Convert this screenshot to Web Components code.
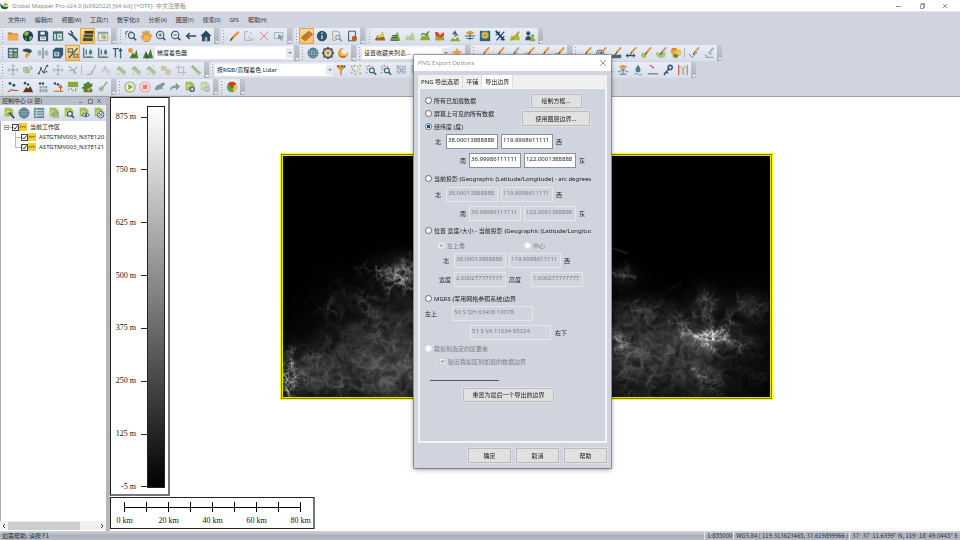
<!DOCTYPE html>
<html lang="zh-CN">
<head>
<meta charset="utf-8">
<title>Global Mapper Pro</title>
<style>
html, body { margin: 0; height: 100%; }
body { font: 6px/8px "Noto Sans", "Noto Sans CJK SC", sans-serif; color: #1b1b1b; background: #cfd4de; overflow: hidden; }
</style>
</head>
<body>
<gm-app></gm-app>
<script>
const base = '*{box-sizing:border-box}button,input,select{font:inherit;color:inherit;margin:0}';
function define(name, css, html, setup) {
  customElements.define(name, class extends HTMLElement {
    constructor() { super(); this.attachShadow({ mode: 'open' }); }
    connectedCallback() {
      if (this.shadowRoot.childNodes.length) return;
      this.shadowRoot.innerHTML = '<style>' + base + css + '</style>' + (typeof html === 'function' ? html(this) : html);
      if (setup) setup(this);
    }
  });
}

/* ---------- icons, drawn on a 14 unit grid ---------- */
const N = '#315269', G = '#86ad36', D = '#4c7a2b', O = '#ee9426', Y = '#f3c64a', L = '#9aa8b4', R = '#d9382b';
const p = (d, f, e = '') => `<path d="${d}" fill="${f}" ${e}/>`;
const s = (d, c = N, w = 1.2) => `<path d="${d}" fill="none" stroke="${c}" stroke-width="${w}"/>`;
const c = (x, y, r, f, st = 'none', w = 1) => `<circle cx="${x}" cy="${y}" r="${r}" fill="${f}" stroke="${st}" stroke-width="${w}"/>`;
const pen = (col = O) => s('M13 .5 8 6', col, 2.2) + s('M8.300 5.700 6 9', '#5d4030', 1.3);
const hill = p('M1 12 4 6l2 2 4-6 3 10z', G);
const layer = p('M2 1h7l3 3v7H2z', '#a3c04f') + s('M3.500 8 5.500 4l2 3 2-2', '#e9f2c4', 1);
const mag = (x, y, r, col = N) => c(x, y, r, '#dce8ee', col, 1.2) + s(`M${x+r*.7} ${y+r*.7}l3 3`, col, 1.7);
const pt = (x, y) => c(x, y, 1.5, N);
const I = {
  folder: p('M1 2.500h4l1.300 1.500H13V12H1z', '#d08a35') + p('M1 5.500h12v6.500H1z', '#f0ac50'),
  globe: c(7, 7, 6, '#173f5b') + p('M2.500 3l4-1.500 2 2-2 3-3 1zM8 8l3-1 1 2-3 3.500zM3 10l2-1 1 3z', '#8db743'),
  save: p('M1 1h10.500l1.500 2v10H1z', N) + p('M4 2h5v3.500H4zM3.500 7.500h7v4.500h-7z', '#e9eef4') + s('M4.500 9.500h5', N, .8),
  window: p('M1 1.500h12v11H1z', '#3f6a7c') + p('M2.500 4.500h2v6.500h-2zM6 4.500h5.500V11H6z', '#e4ecd8') + p('M7.500 6h2.500v3H7.500z', G),
  wrench: s('M5 5l7 7.500', N, 2.300) + s('M1.500 3.500 4.500 6 6.500 3.500 4 1', N, 1.700),
  layers: p('M3 1h10.500v3.300H3z', '#4a3420') + p('M2 5h11v3.300H2z', '#6a4621') + p('M1 9h11.500v4H1z', '#3f5040') + s('M1 9h11.500M2 5h11', G, .8),
  overlay: p('M1 2h12v10.500H1z', '#8fa0ac') + p('M2 4.500h10v7H2z', '#e6ede0') + p('M5 5h5v5H5z', '#a9c387') + p('M7.500 7.500h3v3h-3z', O),
  zoomrect: s('M1 2h3M1 2v4M6 2h2M1 8v1', N, 1) + mag(7.5, 6.500, 3.500),
  hand: p('M1 7.500l1.300-1.200L4.300 8 3 2.500 4.500 2 6.300 6 6 1h1.500l1 5L9.300 1.500h1.400v5.500L12.500 5l1 .7-1.800 6L9.500 13.500H5z', '#f2b64f', 'stroke="#a3732a" stroke-width=".6"'),
  zoomin: mag(6, 5.800, 4.300) + s('M3.800 5.800h4.400M6 3.600V8', D, 1.100),
  zoomout: mag(6, 5.800, 4.300) + s('M3.800 5.800h4.400', D, 1.100),
  back: s('M1.500 7H13M5.500 3.500 2 7l3.500 3.500', '#28495f', 1.700),
  home: p('M7 .5 .5 7h1.800v6h9.400V7h1.800z', '#28495f') + p('M5.500 8.500h3V13h-3z', '#9db7c6'),
  pencil: s('M12.500 2 5 9.500', O, 2.700) + s('M5.500 9 2.500 12.500', '#6b4a2c', 1.600),
  select: s('M2 2v10h9L6 7M2 2h4', L, 1) + s('M9 2v3M12 9v2', L, .8),
  cross: s('M2 2l10 10M12 2 2 12', '#dd9aa5', 1.200),
  pointer: s('M1.500 3h10v7h-10z', L, 1) + p('M6 5l6 3-2.500.8L11 12l-1.500.5L8 9.500 6 11z', '#8295a3'),
  measure: p('M.5 9 9 1.500 13.500 5 5 12.500z', '#d7822a', 'stroke="#7a4c1e" stroke-width=".8"') + s('M5 6l1.500 1.500M7 4.500 8.300 6M3.500 8l1.200 1.200', '#5d3b17', .8),
  info: c(7, 7, 6, N) + s('M7 6v4.500M7 3v1.700', '#dfe9ee', 1.600),
  pagefind: s('M2 1.500h6l2 2V7M2 1.500v10.500h4', '#b6ae86', 1.200) + mag(8, 8.500, 2.500, '#8496a3'),
  pagedot: s('M3 1.500h8v11H3z', '#4d6473', 1.300) + c(9.800, 9.800, 3, '#b5611d'),
  mtn1: p('M1 12 4 6l2 2 4-6 3 10z', D) + p('M3 9.500 6 6l4-3 2 5z', Y) + p('M2 12l3-2 4 1 3-2 1 3z', '#d2502d'),
  mtn2: hill + s('M3 9h7M4 6.500h5M2 12h10', '#25515d', 1.100),
  mtn3: `<g opacity=".45">${hill}</g>`,
  mtn4: hill + s('M2 6l3-2 3 1.500 4-4', D, 1.200),
  mtn5: p('M1 2l5 4 6-4-1 10H2z', O) + p('M1 2l4 1 2 4 4-4 1 3-4 3-5-2z', R) + p('M1 12l4-4 3 2 4-1v3z', G),
  mtn6: p('M1 13l3-4 3 2 3-3 3 5z', G) + s('M7 1v7M4 5l3-3 3 5', N, 1.300),
  mtn7: p('M2 3l5-2 5 2-2 2H4z', O) + s('M1 7h12M3 10h8M7 4v8', '#3d6577', 1.200),
  heat: p('M1 1h12v12H1z', '#315d8c') + c(7, 6, 4.500, G) + c(7, 6, 3, Y) + c(7, 6, 1.500, '#ef6538'),
  fly: s('M2 1l10 11', '#163f5b', 2.200) + s('M12 2 3 12M2 6l5-4M8 12l4-5', '#163f5b', 1.300),
  zig: p('M1 12l2-6 3 2 4-6 3 10z', '#a5bf36') + s('M2 12.500 12.500 2', '#cd8e25', 1.300),
  people: c(5, 4, 2.400, N) + p('M1.500 12q0-5 3.500-5t3.500 5z', N) + c(10, 7, 2, G) + p('M7 13q0-4 3-4t3 4z', G),
  grid: p('M1 1h12v12H1z', '#466b7c') + p('M2.500 3h4v2h-4zM8 3h3.500v2H8zM2.500 6.500h4v2h-4zM2.500 10h4v1.500h-4z', '#dce9e4') + p('M8 7h4v5H8z', G),
  curve: p('M1 3q8-3 11 2l-3 2.500-3-1.500-5-1z', N) + p('M5.500 6.500l4 2-5 5-.5-4z', O),
  mirror: s('M7 1v12', '#4f7589', 1.300) + p('M1 4h4v6H1zM9 4h4v6H9z', '#9fb3c0'),
  cube: p('M1 4l3-3h9v8l-3 4H1z', '#315a70') + p('M2.500 5.500h6V11h-6z', '#c7d6dc') + s('M4 7h3M4 9h3', N, 1),
  slash: s('M1.500 2h5v4h-5zM8 8.500h4.500v3.500H8z', '#6a6a58', 1.300) + s('M12.500 1 2 13', N, 1.500),
  well: s('M2 1v11h11M5 3v6', '#386579', 1.300) + p('M10 2q4 6 0 7-4-1 0-7', '#3f819c') + s('M5 11h6', G, 1.200),
  well2: s('M1 2h7M4 2v10M10 5v8', '#386579', 1.500) + p('M10 1l2.500 4h-5z', N),
  sunmt: c(4, 4, 2.700, O) + p('M3 13l4-7 2 3 2-6 2 10z', D),
  twomt: p('M1 13l3.500-8L8 13zM6 13l4-11 3 11z', D) + p('M4.500 5 8 13H5z', '#244d5e'),
  wire: c(7, 7, 5.800, '#9bb8c4', '#3c6478', 1) + s('M1.500 7h11M7 1.500v11M2.700 4h8.600M2.700 10h8.600M6.500 1.500q-6 5.500 0 11M7.500 1.500q6 5.500 0 11', '#3c6478', .7),
  gear: c(7, 7, 5.300, 'none', N, 2) + s('M7 0v2M7 12v2M0 7h2M12 7h2M2 2l1.500 1.500M12 2l-1.500 1.500M2 12l1.500-1.500M12 12l-1.500-1.500', N, 2) + c(7, 7, 4, '#f3d9a8', O, 1.200) + c(7, 7, 1.500, '#4f87a0'),
  swirl: c(7, 7, 4.800, '#f2b64f', O, 2) + c(9, 5, 3.600, '#e9edf5') + s('M3 10q3 3 7 1', '#b4521c', 1.200),
  star: p('M7 .7l1.900 4 4.400.500-3.300 3 .9 4.400L7 10.400 3.100 12.600 4 8.200.7 5.200l4.400-.5z', '#f3a545'),
  pen1: s('M1 12q4-5 6-3t5-1', '#5b7788', 1) + pen(),
  pen2: c(6, 8, 4.500, 'none', '#38576b', 1) + c(6, 8, 2, 'none', '#38576b', 1) + pen(),
  pen3: p('M1 9h12v4H1z', '#4a6374') + pen(),
  pen4: s('M1 10h11M3 8v4M10 8v4', '#294f67', 1.300) + pen(),
  pen5: c(4.500, 9.500, 3.200, '#a6c957') + pen(),
  pen6: `<g opacity=".6">${p('M1 6l5 1 6-2v6l-5 2-5-2z', G)}</g>` + pen('#bb9b74'),
  pen7: s('M1 8l4 4 6-6', '#5b7788', 1) + pen('#c7a174'),
  pen8: s('M2 9l4 3h5M3 12h9', '#9cabb5', 1.500) + s('M12 1 7 7l3 1', '#9cabb5', 2),
  blobs: c(5, 5, 4, '#ef9f2c') + c(9.500, 6.500, 4, Y) + p('M3 9l4-1 3 2-2 3-4-1z', '#58944a') + s('M2 3q3-3 6 1', '#c9642a', 1),
  move: s('M7 1v12M1 7h12M5 3l2-2 2 2M5 11l2 2 2-2M3 5 1 7l2 2M11 5l2 2-2 2', '#9baab6', 1) + c(7, 7, 1.300, '#8fac65'),
  rotate: p('M3 5h6v6H3z', '#a9c387') + s('M2 9V4h6M9 2l3 3-3 2', L, 1.200),
  nodes: s('M2 11 4.500 6l3 4 4-8', '#2b4b60', 1.100) + c(2, 11, 1.200, N) + c(4.500, 5, 1.200, N) + c(8, 10, 1.200, N) + c(12, 2, 1.200, N) + c(11, 9, 1, N),
  cutx: s('M2 2l9 9M12 3 8 7 2 8M8 7v5', '#9baab6', 1.200),
  node: s('M2 12h5l5-9', '#9baab6', 1.200) + c(8, 10, 1.300, '#d4aa86') + c(12, 2, 1, '#d4aa86'),
  link: s('M1 10l5-5 6 5M6 2v3', '#9baab6', 1.100) + s('M3 5l8 8', '#b3bec7', 1),
  tag: p('M2 5l3-2 7 6-3 3z', '#b0c984') + s('M2 7l3-4 7 6-2 4M3 11l2 1M9 2l1 1', '#8fa3aa', 1),
  boxes: s('M2 3h5v4H2zM7 7h5v5H7z', '#c5a897', 1) + c(4, 5, 1.500, '#b0c984') + c(9.500, 9.500, 1.500, '#b0c984'),
  crop: s('M4 1v9h9M1 4h9v9', '#b9c1ca', 1.300),
  ruler: s('M2 2l10 10', '#a9c387', 3.500) + s('M2 4l2-2M5 7l2-2M8 10l2-2', '#7e9c77', .7),
  funnel: p('M1 2h12L8 8v5H6V8z', '#da9831') + c(4, 2.500, 1.300, R) + c(8, 2.500, 1.300, D) + c(11, 3, 1.200, N),
  dots: ['2,3','5,2','9,3','12,2','3,6','11,6','2,10','5,8','8,9','6,12','12,11'].map((v, i) => c(...v.split(','), 1.100, ['#d99b50', '#92a9b4', '#b7c56f'][i % 3])).join(''),
  dotfind: ['2,3','5,2','9,3','3,6','2,10'].map((v, i) => c(...v.split(','), 1.100, i % 2 ? '#d98078' : '#8fa6b4')).join('') + mag(8, 7.500, 2.800),
  mesh: s('M1 3h12M1 6h12M1 9h12M3 1v11M6 1v11M9 1v11M12 1v11', '#9fb2bf', .8) + s('M2 2l9 9M12 3l-8 8', '#7b95a4', 1),
  tower: p('M2 3l5-2 5 2-2 2H4z', '#dc9c4b') + s('M7 5v6M4 7h6M3 12h8M1 9h3M10 9h3', '#54798e', 1.300),
  drop: p('M7 1q6 8 0 9-6-1 0-9', '#42828d') + s('M2 12q3-2 5 0t5 0', '#6e9ea8', 1),
  trend: s('M3 2h2l3 3', R, 1.300) + s('M1 11.500h12', '#4f6674', 1.200),
  key: s('M9 5 3 11v2M5 9l2 2', N, 1.700) + c(9.500, 4, 2.500, '#b8cbd5', N, 1.600),
  barcode: s('M2 1v12', R, 1.200) + s('M5 2l3 10M9 2 6 12', '#9aac9c', 1.100) + s('M12 1v12', G, 1.300) + s('M2 4h2M10 4h3M2 8h2M10 8h3', '#b9a24e', 1),
  pts: c(3.500, 3, 1.700, N) + c(8, 5, 1.700, N) + s('M1 12h2l2-2 3 1h5', '#b24a30', 1.200),
  ptmt: c(3.500, 2.500, 1.500, N) + c(7, 4, 1.500, N) + p('M1 13l4-6 2 2 3-3 3 7z', '#5b3822'),
  ptgrid: c(3.500, 3, 1.500, N) + c(7, 3, 1.500, N) + p('M3 6h9v7H3z', '#86a0ae') + s('M3 9h9M6 6v7M9 6v7', '#eef3f5', .8),
  pttree: c(3.500, 3, 1.500, N) + c(7, 4, 1.500, N) + s('M10 6v6M8 8l2-3 2 3M2 12h11', '#bf6b2d', 1.300),
  canopy: p('M1 1h12v6H1z', '#86ad36') + s('M2 9v2M5 8v2M10 9v3M7 10v2M12 8v1', '#59813a', 1),
  plugin: p('M2 3h3q0-2 2-2t2 2h3v4h-2v2h2v4H2V9H0V7h2z', '#4f8437') + c(8, 10, 2, O),
  brush: s('M12 1 7 7', '#8699a5', 1.500) + c(5, 9, 3, '#b0c5a1') + s('M3 11l4-4', '#778e80', 1),
  play: c(7, 7, 5.900, '#e8f1d7', '#8fa67b', 1.200) + p('M5 3.500 10.500 7 5 10.500z', '#80ae35'),
  stop: c(7, 7, 5.900, '#f4dddc', '#dea6a3', 1.200) + p('M4.500 4.500h5v5h-5z', '#df7f72'),
  turtle: p('M1 10q1-6 6-6 2-3 5-2l1 2-3 2v4l-2-1-5 2z', '#7e98a9'),
  jump: p('M1 12q0-7 7-7V2l5 4.500L8 11V8Q3 8 1 12z', '#7e98a9'),
  layplus: layer + c(9.500, 9.500, 3.300, '#466d79') + s('M7.500 9.500h4M9.500 7.500v4', '#fff', 1),
  layminus: `<g opacity=".5">${layer + c(9.500, 9.500, 3.300, '#71919b') + s('M7.500 9.500h4', '#fff', 1)}</g>`,
  ball: c(7, 7, 6, '#58a845') + p('M7 7 2 3.500A6 6 0 0 1 12 3.500z', R) + p('M7 7l5-3.500a6 6 0 0 1-3 9.200z', Y) + c(7, 7, 2, '#54812e'),
  laywrench: layer + s('M8 7l5 6', N, 2) + s('M6 7l2 1 1-2', N, 1.300),
  list: p('M1 1h12v12H1z', '#6f8f9f') + s('M2 4h10M2 7h10M2 10h10', '#dfe9ee', 1) + s('M4.500 2v10', '#dfe9ee', .7),
  layrect: layer + s('M6 6h6v6H6z', '#7f98a7', 1),
  layfind: layer + mag(8, 8, 2.800),
  layeye: layer + p('M5 9.500q4-5 8.500 0-4.500 4-8.500 0z', '#e5edf0', 'stroke="#315269"') + c(9.300, 9.500, 1.300, N),
  layx: layer + c(9, 9, 3.700, '#e5edf0', N) + s('M7 7l4 4M11 7l-4 4', N, 1),
  logo: p('M1 3q-2 10 7 10 5-1 5-5-5 3-7 0Q3 9 1 3z', '#1f5a4c') + p('M5 5l4-3 4 4-4 3-3-1z', '#a9c23b'),
  terrain: p('M0 0h14v14H0z', '#ead72e') + s('M1 9l3-4 2 3 2-3 2 3 3-3', '#b84a20', 1.500)
};
define('gm-icon', ':host{display:block;width:12px;height:12px}svg{display:block;width:100%;height:100%}',
  el => `<svg viewBox="0 0 14 14" aria-hidden="true">${I[el.getAttribute('name')] || ''}</svg>`);

/* ---------- toolbars ---------- */
define('gm-toolbar', `
:host{display:flex;height:16px;flex:none;background:linear-gradient(#e9edf6,#d9deea);border-radius:2px}
.grip{width:5px;flex:none;background:radial-gradient(circle,#98a0ac 0 .5px,transparent 1px) 0 1px/5px 3px}
button{width:15px;height:16px;padding:0;border:0;background:none;display:grid;place-items:center;flex:none}
button.on{background:linear-gradient(#fbdc9c,#f8c063);outline:1px solid #e2a64b;outline-offset:-1px}
i{width:1px;margin:3px 1px;background:#b0b7c2}
.end{width:5px;margin-left:1px;background:linear-gradient(#c3c8d1,#aab0ba);display:flex;flex-direction:column;justify-content:flex-end;align-items:center;border-radius:0 2px 2px 0;padding-bottom:1px}
.end:after{content:"";border:solid transparent;border-width:2px 2px 0;border-top-color:#fff}`,
  el => '<div class="grip"></div><slot name="before"></slot>' +
    (el.getAttribute('tools') || '').split(' ').filter(Boolean).map(t => {
      if (t === '|') return '<i></i>';
      const n = t.replace('*', '');
      return `<button class="${n !== t ? 'on' : ''}" title="${n}" aria-label="${n}"><gm-icon name="${n}"></gm-icon></button>`;
    }).join('') + '<slot></slot><div class="end"></div>');
define('gm-select', `
:host{display:flex;width:var(--w);height:12px;margin:2px 0;background:#fff;align-items:center}
label{flex:1;display:block;min-width:0}
select{appearance:none;border:0;background:#fff;width:100%;height:12px;padding:0 2px;outline:0;display:block}
span{width:7px;height:10px;background:#e5e8ef;display:grid;place-items:center}
span:after{content:"";border:solid transparent;border-width:2px 2px 0;border-top-color:#888}`,
  el => `<label><select aria-label="${el.getAttribute('label')}"><option>${el.getAttribute('value')}</option></select></label><span></span>`);
define('gm-toolrow', ':host{display:flex;gap:var(--gap,1px);height:17px}', '<slot></slot>');

/* ---------- frame ---------- */
define('gm-titlebar', `
:host{display:flex;height:12px;align-items:center;background:#fff;color:#8b8b8b;padding:0 4px 0 0;border-bottom:1px solid #e4e6ec}
gm-icon{width:9px;height:9px}
h1{font:inherit;margin:0 0 0 3px;flex:1;white-space:nowrap}
button{border:0;background:none;padding:0;width:23px;height:10px;display:grid;place-items:center}
svg{width:8px;height:8px;fill:none;stroke:#999}`,
  `<gm-icon name="logo"></gm-icon><h1>Global Mapper Pro v24.0 (b092022) [64-bit] (+OTF]- 中文注册板</h1>
  <button aria-label="最小化"><svg viewBox="0 0 8 8"><path d="M1 4.500h5"/></svg></button>
  <button aria-label="还原"><svg viewBox="0 0 8 8"><path d="M2.500 2.500h3v4h-3zM3.500 2V1.500h3v4H6"/></svg></button>
  <button aria-label="关闭"><svg viewBox="0 0 8 8"><path d="M2 2l4 4M6 2 2 6"/></svg></button>`);
define('gm-menubar', `
:host{display:block;height:16px}
nav{display:flex;height:15px;align-items:center;padding-left:8px;gap:9px}
button{border:0;background:none;padding:0;white-space:nowrap;color:#333}
small{font-size:5px}`,
  '<nav>' + [['文件', 'F'], ['编辑', 'E'], ['视图', 'W'], ['工具', 'T'], ['数字化', 'I'], ['分析', 'A'], ['图层', 'Y'], ['搜索', 'S'], ['', 'GPS'], ['帮助', 'H']]
    .map(([a, b]) => `<button>${a}<small>${a ? '(' + b + ')' : b}</small></button>`).join('') + '</nav>');
define('gm-statusbar', `
:host{display:flex;height:9px;line-height:9px;background:linear-gradient(#d3d7dd,#a8b0bc 50%,#b6bcc6);color:#333;padding:0 1px 0 2px;white-space:nowrap;font-family:"Noto Sans CJK SC",sans-serif}
p{margin:0;flex:1}
span{border-left:1px solid #e3e6ea;padding:0 1px 0 2px}`,
  `<p>如需帮助, 请按 F1</p><span>1:855000</span><span>WGS 84 ( 119.313623465, 37.619899966 )</span><span>37° 37' 11.6399" N, 119° 18' 49.0445" E</span>`);

/* ---------- layer panel ---------- */
define('gm-layer', `
:host{display:flex;height:10px;align-items:center;padding-left:var(--in,3px);white-space:nowrap}
b{width:5px;height:5px;border:1px solid #a5a5a5;display:grid;place-items:center;flex:none}
b:after{content:"";width:3px;height:1px;background:#777}
u{width:3px;height:1px;background:#bbb;flex:none}
:host([leaf]) u{width:5px}
label{display:flex;align-items:center}
input{appearance:none;width:7px;height:7px;border:1px solid #444;background:#fff;margin:0}
.box{display:grid}
.box>*{grid-area:1/1}
svg{width:7px;height:7px;fill:none;stroke:#333;pointer-events:none}
gm-icon{width:8px;height:8px}
span.t{margin-left:3px}`,
  el => (el.hasAttribute('leaf') ? '' : '<b></b>') + `<u></u><label><span class="box"><input type="checkbox" checked><svg viewBox="0 0 7 7"><path d="M1.500 3.500 3 5l2.500-3.500"/></svg></span><gm-icon name="terrain"></gm-icon><span class="t"><slot></slot></span></label>`);
define('gm-panel', `
:host{display:flex;flex-direction:column;width:110px;border-right:4px solid #b3b6bc;background:#fff;flex:none;min-height:0}
header{display:flex;height:8px;background:#b7bfca;align-items:center;padding:0 2px;color:#333}
h2{font:inherit;margin:0;flex:1}
header button{border:0;background:none;padding:0;width:9px;height:8px}
header svg{display:block;width:8px;height:8px;fill:none;stroke:#777}
.tools{display:flex;height:16px;background:linear-gradient(#f0f3fa,#d3d9e6);align-items:center;padding-left:1px}
.tools button{border:0;background:none;width:15px;height:16px;padding:0;display:grid;place-items:center}
.tree{flex:1;overflow:hidden;padding-top:1px;border-left:1px solid #aab;min-height:0}
.kids{margin-left:14px;border-left:1px solid #bbb;height:16px}
.kids gm-layer{--in:0px}
.scroll{display:flex;height:9px;background:#f0f0f0;align-items:center;justify-content:space-between;margin-bottom:1px}
.scroll svg{width:8px;height:8px;fill:none;stroke:#444}
.scroll div{flex:1;padding-right:18px}.scroll div:before{content:"";display:block;height:8px;background:#cdcdcd}`,
  `<header><h2>控制中心 (2 层)</h2>
  <button aria-label="折叠"><svg viewBox="0 0 8 8"><path d="M2 5.500h3"/></svg></button><button aria-label="最大化"><svg viewBox="0 0 8 8"><path d="M2.500 2.500h4v4h-4z"/></svg></button><button aria-label="关闭"><svg viewBox="0 0 8 8"><path d="M2 2l4 4M6 2 2 6"/></svg></button></header>
  <div class="tools">${['laywrench', 'wire', 'list', 'layrect', 'layfind', 'layeye', 'layx'].map(n => `<button aria-label="${n}"><gm-icon name="${n}"></gm-icon></button>`).join('')}</div>
  <div class="tree"><gm-layer>当前工作区</gm-layer><div class="kids"><gm-layer leaf>ASTGTMV003_N37E120</gm-layer><gm-layer leaf>ASTGTMV003_N37E121</gm-layer></div></div>
  <div class="scroll"><svg viewBox="0 0 8 8"><path d="M5 2 3 4l2 2"/></svg><div></div><svg viewBox="0 0 8 8"><path d="M3 2l2 2-2 2"/></svg></div>`);

/* ---------- map ---------- */
define('gm-terrain', ':host{display:block;border:1px solid #ff0;background:#808000;padding:1px;box-sizing:border-box}canvas{display:block;width:100%;height:100%;border:1px solid #e4e400}',
  '<canvas width="488" height="242"></canvas>', el => {
  const cv = el.shadowRoot.querySelector('canvas'), g = cv.getContext('2d'), W = 488, H = 242;
  let seed = 7; const rnd = () => (seed = (seed * 1664525 + 1013904223) >>> 0) / 4294967296;
  const T = Array.from({ length: 65536 }, rnd);
  const at = (x, y) => T[((y & 255) << 8) | (x & 255)];
  const noise = (x, y) => {
    const i = Math.floor(x), j = Math.floor(y); let u = x - i, v = y - j; u = u * u * (3 - 2 * u); v = v * v * (3 - 2 * v);
    return (at(i, j) * (1 - u) + at(i + 1, j) * u) * (1 - v) + (at(i, j + 1) * (1 - u) + at(i + 1, j + 1) * u) * v;
  };
  /* broad elevation: x, y, radius x, radius y, strength */
  const B = [[120, 115, 24, 16, 50], [85, 165, 50, 38, 26], [125, 195, 60, 50, 44], [10, 218, 30, 22, 55], [60, 215, 70, 30, 44],
    [180, 190, 60, 50, 46], [340, 120, 16, 12, 34], [345, 200, 34, 42, 60], [385, 205, 50, 40, 46], [430, 185, 30, 13, 80], [423, 150, 15, 20, 40],
    [397, 172, 16, 22, 36], [465, 156, 26, 22, 32], [420, 222, 26, 24, 46], [470, 205, 36, 40, 16], [362, 160, 30, 18, 26], [110, 225, 60, 22, 34]];
  const img = g.createImageData(W, H);
  for (let y = 0; y < H; y++) for (let x = 0; x < W; x++) {
    let e = 0;
    for (const b of B) { const q = ((x - b[0]) / b[2]) ** 2 + ((y - b[1]) / b[3]) ** 2; if (q < 5) e += b[4] * Math.exp(-q); }
    let v = 0;
    if (e > 1) {
      const wx = x + noise(x / 7, y / 7) * 9, wy = y + noise(x / 7 + 50, y / 7 + 50) * 9; let a = .42, f = .09;
      for (let o = 0; o < 4; o++) { v += a * (1 - Math.abs(2 * noise(wx * f + o * 31, wy * f + o * 17) - 1)); a *= .7; f *= 2; }
      v = Math.min(150, e * (.3 + v * v * .75));
    }
    const k = (y * W + x) * 4; img.data[k] = img.data[k + 1] = img.data[k + 2] = v; img.data[k + 3] = 255;
  }
  g.putImageData(img, 0, 0);
  g.globalCompositeOperation = 'lighter';
  const walk = (x, y, a, len, al, depth) => {
    for (let i = 0; i < len; i++) {
      const nx = x + Math.cos(a) * 1.500, ny = y + Math.sin(a) * 1.300;
      g.strokeStyle = `rgba(255,255,255,${al * (1 - i / len * .75)})`; g.lineWidth = .9;
      g.beginPath(); g.moveTo(x, y); g.lineTo(nx, ny); g.stroke();
      x = nx; y = ny; a += (rnd() - .5) * 1.100;
      if (depth && rnd() < .45) walk(x, y, a + (rnd() < .5 ? -1 : 1) * (.6 + rnd() * .6), len * .5, al * .75, depth - 1);
    }
  };
  /* ridge systems: x, y, reach, alpha, arms */
  [[118, 122, 10, .4, 6], [112, 128, 8, .26, 5], [126, 114, 8, .3, 5], [124, 106, 6, .2, 4], [95, 115, 7, .3, 5], [78, 112, 6, .14, 4], [82, 145, 8, .15, 5], [86, 160, 8, .15, 5], [45, 154, 8, .14, 5],
    [8, 204, 8, .26, 5], [4, 224, 8, .4, 6], [12, 222, 7, .3, 5], [5, 236, 7, .35, 5], [30, 202, 6, .14, 4], [55, 232, 7, .16, 5], [100, 175, 14, .05, 6], [60, 190, 16, .05, 6],
    [90, 220, 16, .05, 6], [62, 140, 12, .06, 5], [118, 200, 16, .05, 6], [30, 225, 16, .06, 6],
    [431, 184, 10, .5, 8], [420, 180, 8, .28, 6], [408, 178, 7, .26, 5], [442, 182, 8, .25, 5], [460, 190, 7, .18, 5], [424, 144, 8, .2, 6], [422, 160, 8, .2, 5],
    [448, 166, 7, .24, 5], [462, 150, 10, .12, 6], [342, 120, 7, .26, 6], [338, 186, 8, .34, 6], [345, 200, 12, .14, 6], [396, 168, 8, .2, 5], [350, 155, 11, .1, 6], [368, 155, 11, .1, 6],
    [424, 222, 10, .18, 5], [430, 234, 8, .14, 5], [380, 210, 15, .07, 6], [360, 226, 14, .08, 6], [470, 218, 14, .05, 6], [478, 150, 9, .08, 5]]
    .forEach(([x, y, r, a, n]) => { for (let i = 0; i < n; i++) walk(x, y, i / n * 6.283 + rnd(), r, a * .75, 2); });
  g.strokeStyle = 'rgba(255,255,255,.2)'; g.lineWidth = 1;
  g.beginPath(); g.moveTo(328, 92); g.lineTo(338, 95); g.lineTo(346, 98); g.stroke();
  g.strokeStyle = 'rgba(255,255,255,.1)'; g.beginPath(); g.moveTo(386, 134); g.lineTo(400, 127); g.stroke();
});
define('gm-legend', `
:host{display:flex;width:60px;height:399px;border:1px solid #222;border-right:2px solid #777;border-bottom:2px solid #777;background:#fff;padding:8px 3px 6px 0;font:8px/10px "Liberation Serif",serif;color:#111;justify-content:flex-end}
ol{list-style:none;margin:0;padding:6px 0 0;display:flex;flex-direction:column;justify-content:space-between;align-items:flex-end;margin-bottom:-4px}
li{display:flex;align-items:center;gap:5px}
li:after{content:"";width:6px;height:1px;background:#222}
.bar{width:18px;border:1px solid #222;background:linear-gradient(#fff,#000)}`,
  '<ol>' + [875, 750, 625, 500, 375, 250, 125, -5].map(v => `<li>${v} m</li>`).join('') + '</ol><div class="bar"></div>');
define('gm-scale', `
:host{display:block;width:205px;height:32px;border:1px solid #222;border-right:2px solid #777;background:#fff;padding:4px 12px 0 13px;font:8px/10px "Liberation Serif",serif;color:#111}
.axis{height:10px;display:flex;justify-content:space-between;background:linear-gradient(#000,#000) center/100% 1px no-repeat}
.axis i{width:1px;background:#000}
.lab{display:flex;justify-content:space-between;margin-top:4px}
.lab span{width:1px;display:flex;justify-content:center;white-space:nowrap}`,
  '<div class="axis">' + '<i></i>'.repeat(9) + '</div><div class="lab">' + [0, 20, 40, 60, 80].map(v => `<span>${v} km</span>`).join('') + '</div>');
define('gm-map', `
:host{display:flex;flex-direction:column;align-items:flex-start;position:relative;flex:1;background:#fff;min-width:0}
gm-scale{margin-top:1px}
gm-terrain{position:absolute;left:170px;top:56px;width:493px;height:247px}`,
  '<gm-legend></gm-legend><gm-scale></gm-scale><gm-terrain></gm-terrain>');

/* ---------- export dialog ---------- */
define('gm-button', `
:host{display:block}
button{width:100%;height:100%;padding:0 8px;background:#e1e1e1;border:1px solid #bbb;outline:1px solid #dcdfe3;white-space:nowrap}`, '<button><slot></slot></button>');
define('gm-radio', `
:host{display:block;overflow:hidden;white-space:nowrap}
label{display:flex;align-items:center;gap:2px;height:100%}
input{appearance:none;width:7px;height:7px;border:1px solid #666;border-radius:50%;background:#fff;flex:none}
input:checked{background:radial-gradient(circle,#0c4f86 0 1.500px,#fff 2px)}
:host([type=checkbox]) input{border-radius:0;border-color:#d0d0d0;background:#fff}
input:disabled{border-color:#e6e6e6}
input:disabled:checked{background:radial-gradient(circle,#bbb 0 1.500px,#f2f2f2 2px)}
:host([off]){color:#7b7f87}
.b{display:grid}.b>*{grid-area:1/1}
svg{width:7px;height:7px;fill:none;stroke:#aaa}`,
  el => {
    const k = el.getAttribute('type') || 'radio', off = el.hasAttribute('off') ? 'disabled' : '';
    return `<label><span class="b"><input type="${k}" name="r" ${off} ${el.hasAttribute('on') ? 'checked' : ''}>${k === 'checkbox' ? '<svg viewBox="0 0 7 7"><path d="M1.500 3.500 3 5l2.500-3"/></svg>' : ''}</span><span><slot></slot></span></label>`;
  });
define('gm-field', `
:host{display:block;height:15px;width:52px;flex:none}
input{width:100%;height:100%;display:block;border:1px solid #8b8f96;background:#fff;padding:0 1px 3px;outline:0;color:#222}
input:disabled{background:#cfd4de;border-color:#e4e6ea;color:#7b7f87}`,
  el => `<input type="text" aria-label="${el.getAttribute('label')}" value="${el.getAttribute('value')}" ${el.hasAttribute('off') ? 'disabled' : ''}>`);
define('gm-dialog', `
:host{display:block;background:#cfd4de;box-shadow:0 1px 5px rgba(0,0,0,.5),0 0 0 1px #aeb3bb}
header{height:16px;background:#fff;display:flex;align-items:center;padding:0 4px;color:#929292}
h2{font:inherit;margin:0;flex:1}
header button{border:0;background:none;padding:0;width:8px;height:8px}
header svg{display:block;width:8px;height:8px;fill:none;stroke:#999}
.tabs{margin:4px 4px 0;display:flex;height:13px;background:#f0f0f0}
.tabs button{border:0;border-right:1px solid #ddd;background:none;padding:0 3px;white-space:nowrap}
.tabs .cur{background:#fff}
.page{margin:0 4px;border:2px solid #f3f4f6;border-top-width:1px;height:355px;padding:5px 14px 0 5px}
.top{display:flex;justify-content:space-between}
.top .r{display:flex;flex-direction:column;align-items:center;gap:3px;margin-right:1px}
gm-radio{height:13px}
.row{display:flex;gap:3px;align-items:center;height:15px;margin-top:4px}
.a{padding-left:10px}.b{padding-left:35px}.c{padding-left:18px}
.a span:first-child,.c span:first-child{margin-right:2px}
.w{width:81px}
hr{width:69px;border:0;border-top:1px solid #555a64;margin:12px 0 7px 5px}
footer{display:flex;gap:5px;justify-content:flex-end;padding:5px 4px}
footer gm-button{width:43px;height:15px}`,
  `<header><h2>PNG Export Options</h2><button aria-label="关闭"><svg viewBox="0 0 8 8"><path d="M1 1l6 6M7 1 1 7"/></svg></button></header>
  <div class="tabs"><button>PNG 导出选项</button><button>平铺</button><button class="cur">导出边界</button></div>
  <div class="page">
    <div class="top"><div><gm-radio>所有已加载数据</gm-radio><gm-radio>屏幕上可见的所有数据</gm-radio><gm-radio on>经纬度 (度)</gm-radio></div>
      <div class="r"><gm-button style="width:51px;height:14px">绘制方框...</gm-button><gm-button style="width:68px;height:15px">使用图层边界...</gm-button></div></div>
    <div class="row a" style="margin-top:1px"><span>北</span><gm-field label="北" value="38.00013888888"></gm-field><gm-field label="西" value="119.9998611111"></gm-field><span>西</span></div>
    <div class="row b"><span>南</span><gm-field label="南" value="36.99986111111"></gm-field><gm-field label="东" value="122.0001388888"></gm-field><span>东</span></div>
    <gm-radio style="margin-top:4px">当前投影 (Geographic (Latitude/Longitude) - arc degrees)</gm-radio>
    <div class="row a" style="margin-top:2px"><span>北</span><gm-field off label="北" value="38.00013888888"></gm-field><gm-field off label="西" value="119.9998611111"></gm-field><span>西</span></div>
    <div class="row b"><span>南</span><gm-field off label="南" value="36.99986111111"></gm-field><gm-field off label="东" value="122.0001388888"></gm-field><span>东</span></div>
    <gm-radio style="margin-top:3px">位置 宽度/大小 - 当前投影 (Geographic (Latitude/Longitude))</gm-radio>
    <div style="display:flex;gap:59px;padding-left:13px;margin-top:2px"><gm-radio off on>左上角</gm-radio><gm-radio off>中心</gm-radio></div>
    <div class="row c" style="margin-top:1px"><span>北</span><gm-field off label="北" value="38.00013888888"></gm-field><gm-field off label="西" value="119.9998611111"></gm-field><span>西</span></div>
    <div class="row" style="padding-left:14px"><span>宽度</span><gm-field off label="宽度" value="2.000277777777"></gm-field><span style="width:19px">高度</span><gm-field off label="高度" value="1.000277777777"></gm-field></div>
    <gm-radio style="margin-top:5px">MGRS (军用网格参照系统)边界</gm-radio>
    <div class="row" style="margin-top:1px;gap:15px"><span>左上</span><gm-field class="w" off label="左上" value="50 S QH 63408 10078"></gm-field></div>
    <div class="row" style="padding-left:45px;gap:4px"><gm-field class="w" off label="右下" value="51 S VA 11034 95324"></gm-field><span>右下</span></div>
    <gm-radio off style="margin-top:2px">裁剪到选定的区要素</gm-radio>
    <gm-radio off on type="checkbox" style="margin-left:14px">贴近裁剪区到加载的数据边界</gm-radio>
    <hr>
    <gm-button style="width:91px;height:14px;margin-left:38px">重置为最后一个导出的边界</gm-button>
  </div>
  <footer><gm-button>确定</gm-button><gm-button>取消</gm-button><gm-button>帮助</gm-button></footer>`);

define('gm-app', `
:host{display:flex;flex-direction:column;height:100vh;position:relative}
main{display:flex;flex:1;min-height:0;border-top:1px solid #9b9ea3}
gm-dialog{position:absolute;left:414px;top:55px;width:197px}`,
  `<gm-titlebar></gm-titlebar><gm-menubar></gm-menubar>
  <div>
  <gm-toolrow style="--gap:2px"><gm-toolbar tools="folder globe save window wrench *layers overlay"></gm-toolbar><gm-toolbar tools="zoomrect hand zoomin zoomout back home"></gm-toolbar><gm-toolbar tools="pencil select cross pointer"></gm-toolbar><gm-toolbar tools="*measure info pagefind pagedot"></gm-toolbar><gm-toolbar tools="mtn1 mtn2 mtn3 mtn4 mtn5 mtn6 mtn7 heat fly zig people"></gm-toolbar></gm-toolrow>
  <gm-toolrow><gm-toolbar tools="grid curve mirror cube *slash well well well2 sunmt twomt"><gm-select style="--w:138px" label="着色器" value="梯度着色器"></gm-select></gm-toolbar><gm-toolbar tools="wire gear swirl"></gm-toolbar><gm-toolbar tools="star"><gm-select slot="before" style="--w:87px" label="收藏夹" value="设置收藏夹列表..."></gm-select></gm-toolbar><gm-toolbar tools="pen1 pen1 pen7 pen5 pen1 pen5"></gm-toolbar><gm-toolbar tools="pen1 pen2 pen3 pen4 pen5 pen6 blobs | pen7 pen8"></gm-toolbar></gm-toolrow>
  <gm-toolrow><gm-toolbar tools="move rotate nodes move cutx | node link tag tag tag boxes crop ruler"></gm-toolbar><gm-toolbar tools="funnel dots dotfind dotfind mesh mesh | mesh mesh mesh mesh | mesh mesh mesh mesh | mesh mesh mesh | tower tower drop trend key barcode"><gm-select slot="before" style="--w:118px" label="Lidar" value="按RGB/高程着色 Lidar"></gm-select></gm-toolbar></gm-toolrow>
  <gm-toolrow><gm-toolbar tools="pts ptmt ptgrid pttree canopy plugin brush"></gm-toolbar><gm-toolbar tools="play stop turtle jump layplus layminus"></gm-toolbar><gm-toolbar tools="ball"></gm-toolbar></gm-toolrow>
  </div>
  <main><gm-panel></gm-panel><gm-map></gm-map></main>
  <gm-statusbar></gm-statusbar><gm-dialog></gm-dialog>`);
</script>
</body>
</html>
